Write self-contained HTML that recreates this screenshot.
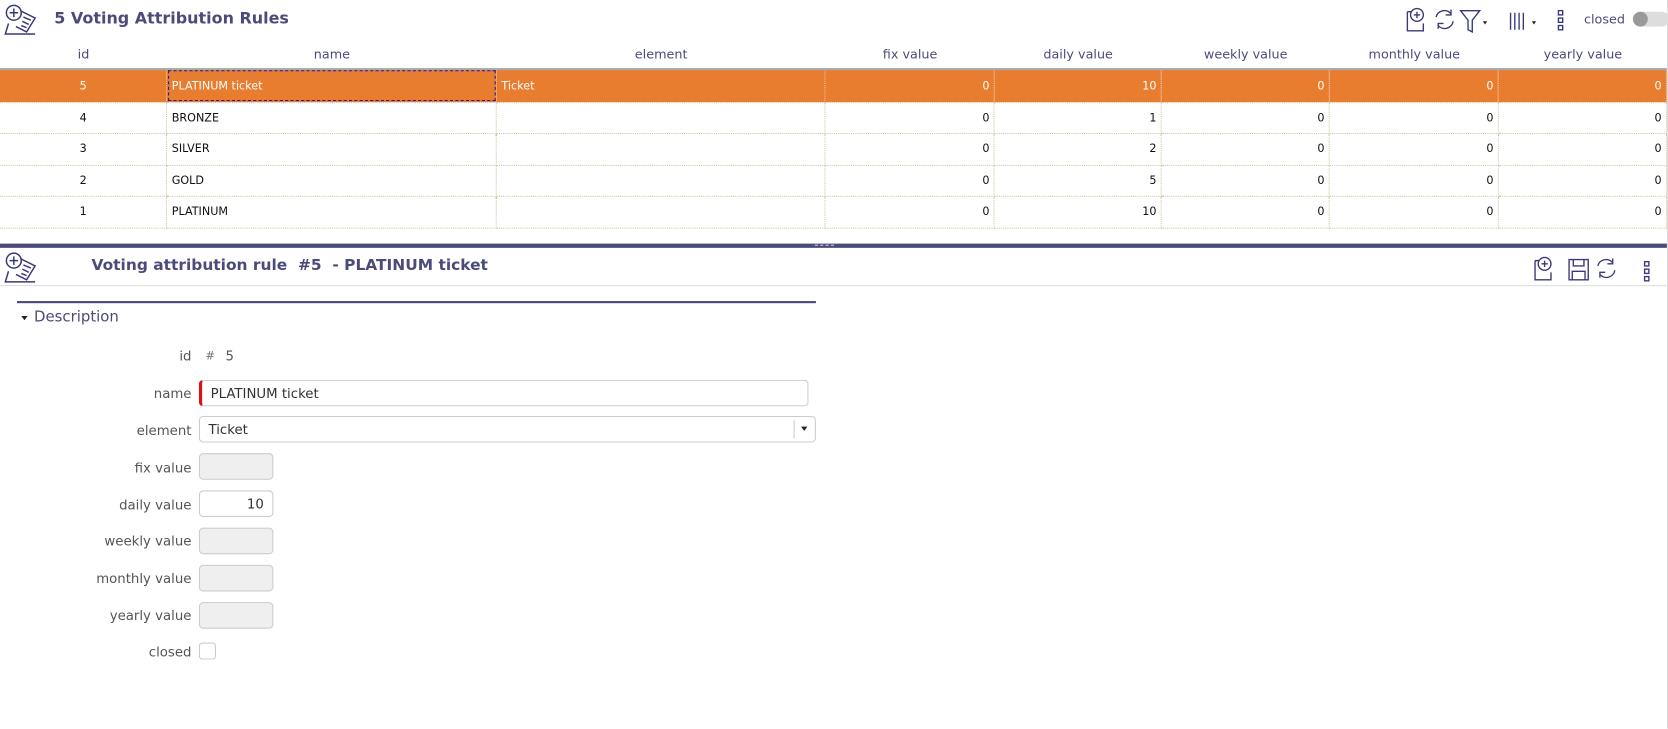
<!DOCTYPE html>
<html><head><meta charset="utf-8"><style>
*{box-sizing:border-box;margin:0;padding:0}
body{width:1668px;height:685px;background:#fff;font-family:"DejaVu Sans","Liberation Sans",sans-serif;position:relative;overflow:hidden;color:#333}
#w{position:absolute;left:0;top:0;width:1568px;height:644px;transform:scale(1.06378);transform-origin:0 0}
.abs{position:absolute}
.title{color:#4b4b7b;font-weight:bold;font-size:15px}
.hdr{position:absolute;top:44px;font-size:12px;color:#4b4b7b;text-align:center}
table{position:absolute;left:0;top:64px;border-collapse:collapse;width:1567px;font-size:10.5px;color:#111}
td{height:29.5px;border-right:1px dotted #cfc6a0;border-bottom:1px dotted #cfc6a0;padding:0 4px;white-space:nowrap}
td.n{text-align:right}
td.c{text-align:center}
tr.sel td{background:#e87d2f;color:#fff;border-right:1px dotted #f3c9a8;height:31px}
tr.sel{border-top:2px solid #a8a8a8}
.lbl{position:absolute;right:1388px;font-size:12.5px;color:#555;text-align:right}
.inp{position:absolute;left:187px;border:1px solid #ccc;border-radius:4px;height:25px;font-size:12.5px;color:#333;padding:4px 8px}
.dis{background:#efefef;width:70px}
</style></head><body><div id="w">
<svg class="abs" style="left:3px;top:2px" width="34" height="32" viewBox="0 0 34 32" fill="none" stroke="#3a3a7a" stroke-width="1.4"><circle cx="10" cy="10" r="7"/><path d="M10 6v8M6 10h8"/><path d="M16 8l14 7-8 13-10-5"/><path d="M19 14l7 3M18 18l6 3M17 22l5 2"/><path d="M5 20l-3 10h28"/></svg>
<div class="abs title" style="left:51px;top:8px">5 Voting Attribution Rules</div>
<svg class="abs" style="left:1320px;top:6px" width="150" height="26" viewBox="0 0 150 26" fill="none" stroke="#3a3a7a" stroke-width="1.3">
<path d="M3 5h4M3 5v18h15v-7"/><circle cx="12" cy="8" r="6"/><path d="M12 5v6M9 8h6"/>
<path d="M30 10a8 8 0 0 1 14-3M46 14a8 8 0 0 1-14 4M44 3v5h-5M32 21v-5h5"/>
<path d="M53 4h18l-7 9v11l-4-2v-9z"/><path d="M74 14l2 3 2-3z" fill="#222" stroke="none"/>
<path d="M100 6v16M104 6v16M108 6v16M112 6v16" /><path d="M120 14l2 3 2-3z" fill="#222" stroke="none"/>
<rect x="145" y="4" width="4" height="4"/><rect x="145" y="11" width="4" height="4"/><rect x="145" y="18" width="4" height="4"/>
</svg>
<div class="abs" style="left:1489px;top:11px;font-size:12px;color:#4b4b7b">closed</div>
<div class="abs" style="left:1535px;top:11px;width:34px;height:14px;border-radius:7px;background:#ddd"></div>
<div class="abs" style="left:1535px;top:11px;width:14px;height:14px;border-radius:7px;background:#999"></div>
<div class="hdr" style="left:0;width:157px">id</div>
<div class="hdr" style="left:157px;width:310px">name</div>
<div class="hdr" style="left:467px;width:309px">element</div>
<div class="hdr" style="left:776px;width:159px">fix value</div>
<div class="hdr" style="left:935px;width:157px">daily value</div>
<div class="hdr" style="left:1092px;width:158px">weekly value</div>
<div class="hdr" style="left:1250px;width:159px">monthly value</div>
<div class="hdr" style="left:1409px;width:158px">yearly value</div>
<table>
<colgroup><col style="width:157px"><col style="width:310px"><col style="width:309px"><col style="width:159px"><col style="width:157px"><col style="width:158px"><col style="width:159px"><col style="width:158px"></colgroup>
<tr class="sel"><td class="c">5</td><td style="outline:1px dashed #1a1a9a;outline-offset:-2px">PLATINUM ticket</td><td>Ticket</td><td class="n">0</td><td class="n">10</td><td class="n">0</td><td class="n">0</td><td class="n">0</td></tr>
<tr><td class="c">4</td><td>BRONZE</td><td></td><td class="n">0</td><td class="n">1</td><td class="n">0</td><td class="n">0</td><td class="n">0</td></tr>
<tr><td class="c">3</td><td>SILVER</td><td></td><td class="n">0</td><td class="n">2</td><td class="n">0</td><td class="n">0</td><td class="n">0</td></tr>
<tr><td class="c">2</td><td>GOLD</td><td></td><td class="n">0</td><td class="n">5</td><td class="n">0</td><td class="n">0</td><td class="n">0</td></tr>
<tr><td class="c">1</td><td>PLATINUM</td><td></td><td class="n">0</td><td class="n">10</td><td class="n">0</td><td class="n">0</td><td class="n">0</td></tr>
</table>
<div class="abs" style="left:0;top:229px;width:1567px;height:4px;background:#4b4b7b"></div>
<div class="abs" style="left:766px;top:230px;width:18px;height:1px;border-top:1px dashed #ccc"></div>
<div class="abs" style="left:1567px;top:0;width:1px;height:685px;background:#ddd"></div>
<svg class="abs" style="left:3px;top:235px" width="34" height="32" viewBox="0 0 34 32" fill="none" stroke="#3a3a7a" stroke-width="1.4"><circle cx="10" cy="10" r="7"/><path d="M10 6v8M6 10h8"/><path d="M16 8l14 7-8 13-10-5"/><path d="M19 14l7 3M18 18l6 3M17 22l5 2"/><path d="M5 20l-3 10h28"/></svg>
<div class="abs title" style="left:86px;top:242px;font-size:14.5px">Voting attribution rule&nbsp; #5&nbsp; - PLATINUM ticket</div>
<svg class="abs" style="left:1440px;top:240px" width="115" height="26" viewBox="0 0 115 26" fill="none" stroke="#3a3a7a" stroke-width="1.3">
<path d="M3 5h4M3 5v18h15v-7"/><circle cx="12" cy="8" r="6"/><path d="M12 5v6M9 8h6"/>
<path d="M35 4h18v19h-18zM39 4v6h10v-6M38 23v-8h12v8"/>
<path d="M62 10a8 8 0 0 1 14-3M78 14a8 8 0 0 1-14 4M76 3v5h-5M64 21v-5h5"/>
<rect x="106" y="6" width="4" height="4"/><rect x="106" y="13" width="4" height="4"/><rect x="106" y="20" width="4" height="4"/>
</svg>
<div class="abs" style="left:0;top:268px;width:1567px;height:1px;background:#ddd"></div>
<div class="abs" style="left:16px;top:283px;width:751px;height:2px;background:#4b4b7b"></div>
<div class="abs" style="left:20px;top:297px;width:0;height:0;border-left:3px solid transparent;border-right:3px solid transparent;border-top:4px solid #222"></div>
<div class="abs" style="left:32px;top:290px;font-size:14px;color:#4b4b7b">Description</div>
<div class="lbl" style="top:327px">id</div>
<div class="abs" style="left:193px;top:328px;font-size:11px;color:#777">#</div>
<div class="abs" style="left:212px;top:327px;font-size:12.5px;color:#555">5</div>
<div class="lbl" style="top:362px">name</div>
<div class="inp" style="top:357px;width:573px;border-left:3px solid #e01010">PLATINUM ticket</div>
<div class="lbl" style="top:397px">element</div>
<div class="inp" style="top:391px;width:580px">Ticket</div>
<div class="abs" style="left:746px;top:395px;width:1px;height:17px;background:#ccc"></div>
<div class="abs" style="left:753px;top:401px;border-left:3.5px solid transparent;border-right:3.5px solid transparent;border-top:4px solid #222"></div>
<div class="lbl" style="top:432px">fix value</div><div class="inp dis" style="top:426px"></div>
<div class="lbl" style="top:467px">daily value</div><div class="inp" style="top:461px;width:70px;text-align:right">10</div>
<div class="lbl" style="top:501px">weekly value</div><div class="inp dis" style="top:496px"></div>
<div class="lbl" style="top:536px">monthly value</div><div class="inp dis" style="top:531px"></div>
<div class="lbl" style="top:571px">yearly value</div><div class="inp dis" style="top:566px"></div>
<div class="lbl" style="top:605px">closed</div>
<div class="abs" style="left:187px;top:604px;width:16px;height:16px;border:1px solid #ccc;border-radius:3px"></div>
</div></body></html>
